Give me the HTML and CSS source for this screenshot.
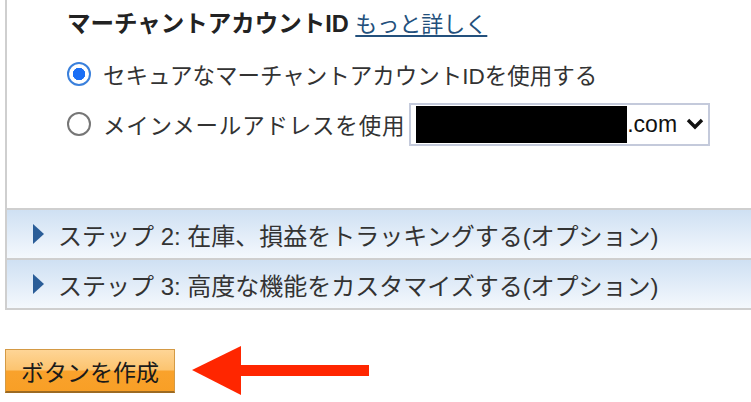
FILE: index.html
```html
<!DOCTYPE html>
<html lang="ja">
<head>
  <meta charset="UTF-8">
  <meta name="viewport" content="width=device-width, initial-scale=1.0">
  <title>ボタンを作成</title>
  <link rel="stylesheet" href="styles.css">
</head>
<body>
  <div class="wizard">
    <section class="panel">
      <div class="title"><b>マーチャントアカウントID</b> <a href="#">もっと詳しく</a></div>
      <label class="opt"><input type="radio" name="merchant" checked>セキュアなマーチャントアカウントIDを使用する</label>
      <label class="opt"><input type="radio" name="merchant"><span class="wide">メインメールアドレスを使用</span>
        <span class="select"><span class="mask"></span>.com
          <svg class="chev" width="18" height="12" viewBox="0 0 18 12"><path d="M2 2 L9 9 L16 2" fill="none" stroke="#111" stroke-width="3.4"/></svg>
        </span>
      </label>
    </section>
    <div class="step"><span class="tri"></span>ステップ 2: 在庫、損益をトラッキングする(オプション)</div>
    <div class="step"><span class="tri"></span>ステップ 3: 高度な機能をカスタマイズする(オプション)</div>
  </div>

  <div class="actions">
    <button class="create">ボタンを作成</button>
    <svg class="arrow" width="178" height="50" viewBox="0 0 178 50">
      <polygon points="0,24 49,0 49,49" fill="#ff2600"/>
      <rect x="48" y="19" width="129" height="11" fill="#ff2600"/>
    </svg>
  </div>
</body>
</html>
```

FILE: styles.css
```css
html, body { margin: 0; padding: 0; overflow: hidden; background: #fff; }
body { font-family: "Liberation Sans", "Noto Sans CJK JP", sans-serif; font-size: 22.5px; color: #333; }

.wizard { margin-left: 5px; border-left: 2px solid #cfcfcf; border-bottom: 2px solid #cfcfcf; }
.panel { height: 210px; box-sizing: border-box; padding: 8px 0 0 60px; border-bottom: 2px solid #cfcfcf; }
.title { height: 32px; line-height: 32px; font-size: 23.5px; color: #222; margin-bottom: 9px; white-space: nowrap; }
.title a { font-size: 22px; color: #23507c; text-decoration: underline; text-underline-offset: 3px; }

.opt { display: flex; align-items: center; height: 50px; white-space: nowrap; }
.opt input { appearance: none; -webkit-appearance: none; margin: 0 12px 0 0; width: 24px; height: 24px; border: 2px solid #767676; border-radius: 50%; box-sizing: border-box; background: #fff; }
.opt input:checked { border: 2px solid #3a80dc; background: radial-gradient(circle, #1b6ff5 0 6px, #fff 6.5px); }
.wide { letter-spacing: 0.8px; }

.select { display: inline-flex; align-items: center; box-sizing: border-box; width: 301px; height: 43px; margin-left: 4px; padding-left: 5px; border: 2px solid #c4cadb; color: #111; font-size: 23px; }
.mask { width: 211px; height: 37px; background: #000; }
.chev { margin-left: 9px; }

.step { display: flex; align-items: center; height: 48px; padding-left: 26px; border-bottom: 2px solid #cfcfcf; background: linear-gradient(#cfe0f3, #f4f8fd); color: #333; font-size: 24px; white-space: nowrap; }
.step:last-child { border-bottom: none; }
.tri { width: 0; height: 0; margin-right: 14px; border-top: 10px solid transparent; border-bottom: 10px solid transparent; border-left: 11px solid #2a5d98; }

.actions { display: flex; align-items: center; padding: 36px 0 0 5px; }
.create { width: 170px; height: 44px; padding: 0; font-family: inherit; font-size: 23px; color: #1a1a1a; border: 1px solid #d49a45; border-bottom: 2px solid #9c6a22; background: linear-gradient(#fed596 0%, #fcc470 48%, #f9a22c 52%, #f89f26 100%); }
.arrow { margin-left: 17px; }
```
